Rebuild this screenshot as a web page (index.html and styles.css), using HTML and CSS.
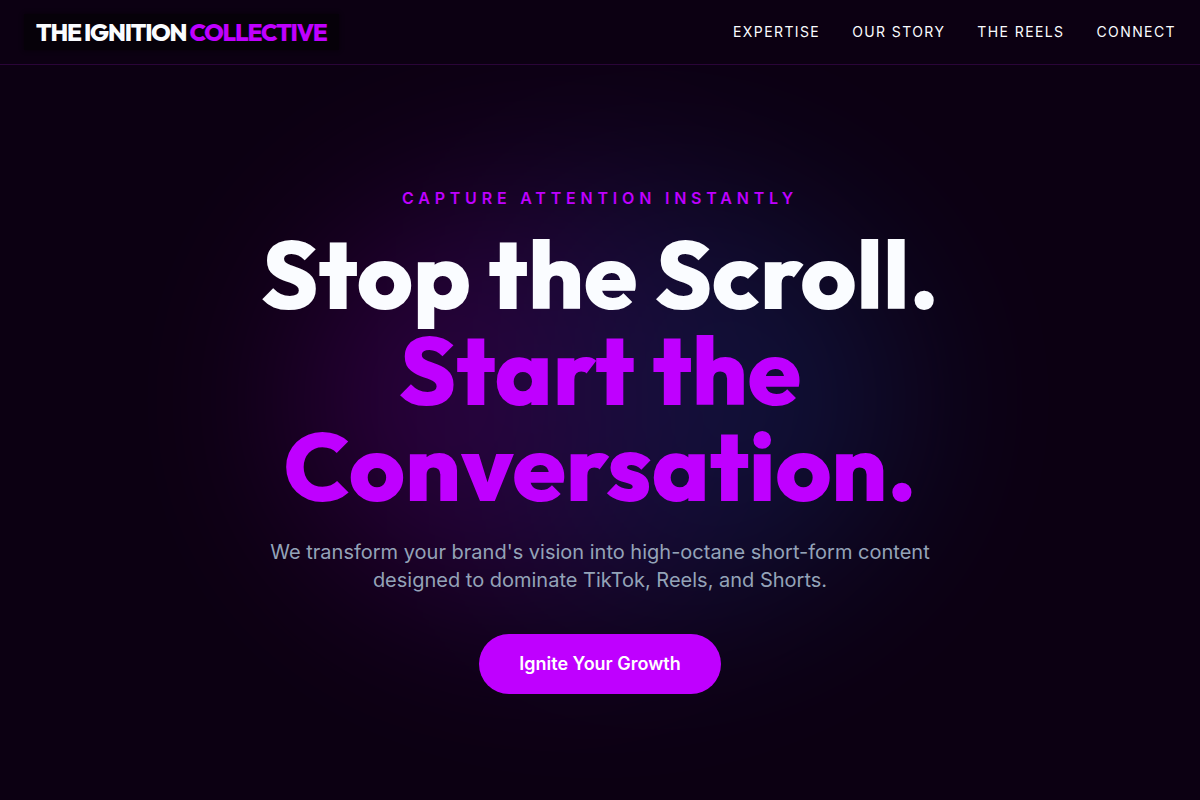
FILE: index.html
```html
<!DOCTYPE html>
<html lang="en">

<head>
    <meta charset="UTF-8">
    <meta name="viewport" content="width=device-width, initial-scale=1.0">
    <title>The Ignition Collective</title>
    <link rel="stylesheet" href="styles.css">
</head>

<body>
    <header class="site-header">
        <a href="#home" class="logo">THE IGNITION <span class="accent">COLLECTIVE</span></a>
        <nav class="main-nav">
            <a href="#expertise">Expertise</a>
            <a href="#story">Our Story</a>
            <a href="#reels">The Reels</a>
            <a href="#connect">Connect</a>
        </nav>
    </header>

    <main>
        <section class="hero" id="home">
            <p class="eyebrow">Capture Attention Instantly</p>
            <h1>Stop the Scroll.<br><span class="accent">Start the Conversation.</span></h1>
            <p class="lead">We transform your brand's vision into high-octane short-form content designed to dominate
                TikTok, Reels, and Shorts.</p>
            <a href="#connect" class="btn">Ignite Your Growth</a>
        </section>
    </main>
</body>

</html>
```
FILE: styles.css
```css
* {
    margin: 0;
    padding: 0;
    box-sizing: border-box;
}

body {
    background-color: #0c0012;
    color: #fafcff;
    font-family: Inter, sans-serif;
}

a {
    color: inherit;
    text-decoration: none;
}

.accent {
    color: #bf00ff;
}

/* header */
.site-header {
    position: fixed;
    top: 0;
    left: 0;
    right: 0;
    z-index: 10;
    display: flex;
    justify-content: space-between;
    align-items: center;
    height: 65px;
    padding: 0 24px;
    background-color: #0c0012;
    border-bottom: 1px solid #2a0538;
}

.logo {
    padding: 4px 12px;
    background-color: #060109;
    box-shadow: 0 0 4px #060109;
    font-family: Outfit, sans-serif;
    font-size: 24px;
    font-weight: 800;
    line-height: 28px;
    letter-spacing: -0.05em;
}

.main-nav {
    display: flex;
    gap: 32px;
    font-size: 14px;
    line-height: 20px;
    letter-spacing: 0.1em;
    text-transform: uppercase;
}

/* hero */
.hero {
    position: relative;
    z-index: 0;
    overflow: hidden;
    display: flex;
    flex-direction: column;
    align-items: center;
    justify-content: center;
    min-height: 100vh;
    padding: 80px 24px 0;
    text-align: center;
}

/* soft glow behind the headline */
.hero::before {
    content: "";
    position: absolute;
    z-index: -1;
    top: 50%;
    left: 50%;
    width: 600px;
    height: 440px;
    border-radius: 50%;
    background: linear-gradient(to right, #bf00ff 20%, #2060e0 70%);
    opacity: 0.19;
    filter: blur(90px);
    transform: translate(-50%, -50%);
}

.eyebrow {
    margin-bottom: 16px;
    color: #bf00ff;
    font-size: 16px;
    font-weight: 600;
    line-height: 24px;
    letter-spacing: 0.3em;
    text-transform: uppercase;
}

.hero h1 {
    max-width: 896px;
    margin-bottom: 24px;
    font-family: Outfit, sans-serif;
    font-size: 96px;
    font-weight: 800;
    line-height: 96px;
}

.lead {
    max-width: 672px;
    margin-bottom: 40px;
    color: #94a3b8;
    font-size: 20px;
    line-height: 28px;
}

.btn {
    padding: 16px 40px;
    border-radius: 30px;
    background-color: #bf00ff;
    color: #fff;
    font-size: 18px;
    font-weight: 600;
    line-height: 28px;
}
```
